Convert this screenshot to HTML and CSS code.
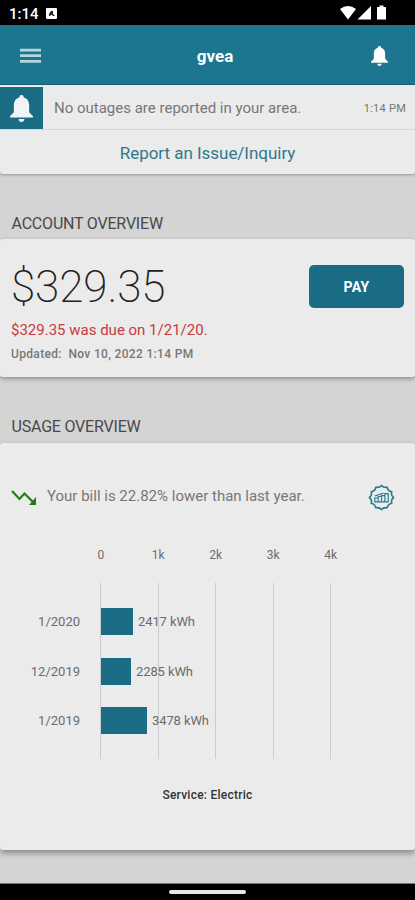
FILE: index.html
```html
<!DOCTYPE html>
<html lang="en">
<head>
<meta charset="utf-8">
<title>gvea</title>
<meta name="viewport" content="width=device-width">
<link rel="stylesheet" href="styles.css">
</head>
<body>
<div class="status">
  <span class="clock">1:14</span>
  <svg class="notice" width="11" height="11" viewBox="0 0 11 11"><rect width="11" height="11" rx="1" fill="#fff"/><path d="M3 8V6l2-3h2v3l2 2H7L5.500 6.500 4 8z" fill="#222"/></svg>
  <svg class="signals" width="48" height="15" viewBox="0 0 48 15" fill="#fff"><path d="M0 4Q8-2 16 4L8 14.500z"/><path d="M17.500 14.500 31 1v13.500z"/><path d="M37 2h2.500V.5h4V2H46v12.500h-9z"/></svg>
</div>
<header class="appbar">
  <svg class="menu" width="21" height="16" viewBox="0 0 21 16" fill="#b5d5df"><path d="M0 .7h21v2.800H0zM0 6.200h21V9H0zM0 11.900h21v2.800H0z"/></svg>
  <h1>gvea</h1>
  <svg class="bell" width="17" height="20" viewBox="0 0 24 28" fill="#fff"><path d="M12 0c1.400 0 2.200.9 2.300 2.400C18.600 3.600 20 7 20 11v7l4 4v1.500H0V22l4-4v-7c0-4 1.400-7.400 5.700-8.600C9.800.9 10.600 0 12 0zM9 25h6c0 2-1.300 3-3 3s-3-1-3-3z"/></svg>
</header>
<main>
  <section class="card alerts">
    <div class="outage">
      <div class="tile"><svg width="23" height="27" viewBox="0 0 24 28" fill="#f0f4f5"><path d="M12 0c1.400 0 2.200.9 2.300 2.400C18.600 3.600 20 7 20 11v7l4 4v1.500H0V22l4-4v-7c0-4 1.400-7.400 5.700-8.600C9.800.9 10.600 0 12 0zM9 25h6c0 2-1.300 3-3 3s-3-1-3-3z"/></svg></div>
      <span class="message">No outages are reported in your area.</span>
      <span class="time">1:14 PM</span>
    </div>
    <a class="report">Report an Issue/Inquiry</a>
  </section>

  <h2 class="account-title">ACCOUNT OVERVIEW</h2>
  <section class="card account">
    <div class="balance">
      <div class="amount">$329.35</div>
      <div class="due">$329.35 was due on 1/21/20.</div>
      <div class="updated">Updated:&nbsp; Nov 10, 2022 1:14 PM</div>
    </div>
    <button class="pay">PAY</button>
  </section>

  <h2 class="usage-title">USAGE OVERVIEW</h2>
  <section class="card usage">
    <div class="trend">
      <svg width="26" height="17" viewBox="0 0 26 17"><path d="M1 2 8.500 10 13.500 4.500 21.500 12.500" fill="none" stroke="#257a1b" stroke-width="2.200"/><path d="M25 8v8h-7z" fill="#257a1b"/></svg>
      <span class="trend-text">Your bill is 22.82% lower than last year.</span>
      <svg class="badge" width="27" height="27" viewBox="0 0 28 28" fill="none" stroke="#287b92"><path stroke-width="1.700" stroke-linejoin="round" d="M14 1.500 Q16 4 20 3.400 Q20.700 7.200 24.600 8 Q23.600 11.600 26.500 14 Q23.600 16.400 24.600 20 Q20.700 20.800 20 24.600 Q16 24 14 26.500 Q12 24 8 24.600 Q7.300 20.800 3.400 20 Q4.400 16.400 1.500 14 Q4.400 11.600 3.400 8 Q7.300 7.200 8 3.400 Q12 4 14 1.500Z"/><path stroke-width="1.200" d="M7 14.500h3.500v4H7zM10.500 13H14v5.500h-3.500zM14 12h3.500v6.500H14zM17.500 10h3.500v8.500h-3.500zM7 12.500l9-3"/></svg>
    </div>
    <div class="axis"><span>0</span><span>1k</span><span>2k</span><span>3k</span><span>4k</span></div>
    <div class="chart">
      <div class="grid"><i></i><i></i><i></i><i></i></div>
      <div class="bars">
        <div class="row"><span class="label">1/2020</span><span class="bar" style="width:32px"></span><span class="value">2417 kWh</span></div>
        <div class="row"><span class="label">12/2019</span><span class="bar" style="width:30px"></span><span class="value">2285 kWh</span></div>
        <div class="row"><span class="label">1/2019</span><span class="bar" style="width:46px"></span><span class="value">3478 kWh</span></div>
      </div>
    </div>
    <div class="service">Service: Electric</div>
  </section>
</main>
<footer class="navbar"><span class="handle"></span></footer>
</body>
</html>
```
FILE: styles.css
```css
* { box-sizing: border-box; }
body {
  margin: 0;
  width: 415px;
  height: 900px;
  display: flex;
  flex-direction: column;
  overflow: hidden;
  background: #d4d4d4;
  font-family: Roboto, "Liberation Sans", sans-serif;
  color: #777;
}
svg { display: block; flex: none; }
h1, h2 { margin: 0; }
span, a, div { white-space: nowrap; }

.status {
  height: 25px;
  flex: none;
  background: #000;
  display: flex;
  align-items: center;
  padding: 2px 27px 0 9px;
}
.clock { color: #fff; font-size: 15px; font-weight: 500; width: 37px; }
.signals { margin-left: auto; margin-top: -2px; }

.appbar {
  height: 60px;
  flex: none;
  background: #1c7690;
  border-bottom: 1px solid #12627d;
  display: grid;
  grid-template-columns: 1fr auto 1fr;
  align-items: center;
  padding: 2px 27px 0 20px;
}
.appbar h1 { color: #fff; font-size: 17px; font-weight: 700; line-height: 20px; padding-left: 22px; }
.bell { justify-self: end; }

main { flex: 1; display: flex; flex-direction: column; }
.card {
  background: #ebebeb;
  border-radius: 3px;
  flex: none;
  box-shadow: 0 1px 3px rgba(0, 0, 0, .3);
}
.alerts { height: 89px; border-radius: 0 0 3px 3px; }
.outage {
  height: 45px;
  padding: 2px 9px 0 0;
  display: flex;
  align-items: center;
  border-bottom: 1px solid #d7d7d7;
}
.tile {
  width: 43px;
  height: 42px;
  background: #1a6c84;
  display: flex;
  align-items: center;
  justify-content: center;
}
.message { margin-left: 11px; font-size: 15px; }
.time { margin-left: auto; font-size: 11px; letter-spacing: .25px; }
.report {
  display: block;
  height: 44px;
  line-height: 46px;
  text-align: center;
  color: #32788d;
  font-size: 17px;
  letter-spacing: -.03px;
}

h2 { font-weight: 400; font-size: 16px; letter-spacing: -.2px; color: #484848; padding-left: 11.500px; line-height: 20px; }
.account-title { margin: 40px 0 5px; }
.account {
  height: 138px;
  padding: 24px 11px 0;
  display: flex;
  justify-content: space-between;
  box-shadow: 0 2px 4px rgba(0, 0, 0, .32);
}
.amount { color: #222; font-size: 44px; font-weight: 200; line-height: 48px; letter-spacing: -.1px; }
.due { color: #c63a40; font-size: 15px; line-height: 20px; margin-top: 9px; }
.updated { font-size: 12px; font-weight: 500; line-height: 16px; margin-top: 6px; letter-spacing: .33px; }
.pay {
  width: 95px;
  height: 43px;
  margin-top: 2px;
  border: 0;
  border-radius: 5px;
  background: #1a6c84;
  color: #fff;
  font: 700 14px Roboto, sans-serif;
  letter-spacing: .3px;
}
.usage-title { margin: 40px 0 6px; }
.usage { height: 407px; padding-top: 40px; box-shadow: 0 3px 6px rgba(0, 0, 0, .38); }
.trend { height: 28px; display: flex; align-items: center; padding: 0 20px 0 11px; }
.trend-text { margin-left: 10px; font-size: 15px; line-height: 18px; margin-top: -2px; }
.badge { margin-left: auto; }
.axis {
  display: grid;
  grid-template-columns: repeat(5, 57.5px);
  margin: 36px 0 0 72px;
  text-align: center;
  font-size: 12px;
  line-height: 16px;
  color: #6d6d6d;
}
.chart { display: grid; margin-top: 20px; height: 176px; font-size: 13px; }
.grid {
  grid-area: 1 / 1;
  width: 231px;
  margin-left: 100px;
  display: flex;
  border-left: 1px solid #ccc;
}
.grid i { flex: 1; border-right: 1px solid #ccc; }
.bars { grid-area: 1 / 1; display: flex; flex-direction: column; gap: 22.500px; padding-top: 25px; }
.row { display: flex; align-items: center; height: 27px; color: #6b6b6b; }
.label { width: 80px; text-align: right; }
.bar { margin-left: 21px; height: 27px; background: #1a6c84; flex: none; }
.value { margin-left: 5px; font-size: 13px; letter-spacing: -.1px; }
.service { margin-top: 28px; text-align: center; color: #333; font-size: 12px; font-weight: 500; letter-spacing: .25px; line-height: 16px; }

.navbar {
  height: 17px;
  flex: none;
  background: #000;
  border-top: 1px solid #777;
  display: flex;
  align-items: center;
  justify-content: center;
}
.handle { width: 77px; height: 4px; border-radius: 2px; background: #e8e8e8; }
```
